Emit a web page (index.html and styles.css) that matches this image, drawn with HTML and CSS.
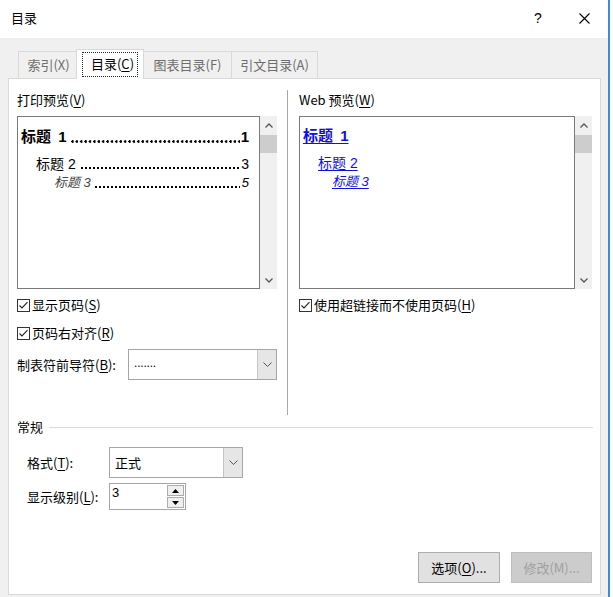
FILE: index.html
```html
<!DOCTYPE html>
<html lang="zh-CN">
<head>
<meta charset="utf-8">
<title>目录</title>
<link rel="stylesheet" href="styles.css">
</head>
<body>
<div class="window">
  <div class="titlebar">
    <span class="title">目录</span>
    <div class="controls">
      <span class="ctl help">?</span>
      <span class="ctl close"><svg width="11" height="11" viewBox="0 0 11 11"><path d="M0.5 0.5 L10.5 10.5 M10.5 0.5 L0.5 10.5" stroke="#000" stroke-width="1.1" fill="none"/></svg></span>
    </div>
  </div>
  <div class="main">
    <div class="tabs">
      <div class="tab t1">索引(X)</div>
      <div class="tab active"><span class="focus">目录(<u>C</u>)</span></div>
      <div class="tab t3">图表目录(F)</div>
      <div class="tab t4">引文目录(A)</div>
    </div>
    <div class="panel">
      <div class="top">
        <div class="col left">
          <div class="label">打印预览(<u>V</u>)</div>
          <div class="preview">
            <div class="pbox">
              <div class="entry e1"><span class="hd">标题 1</span><span class="leader"></span><span class="pg">1</span></div>
              <div class="entry e2"><span class="hd">标题 2</span><span class="leader"></span><span class="pg">3</span></div>
              <div class="entry e3"><span class="hd">标题 3</span><span class="leader"></span><span class="pg">5</span></div>
            </div>
            <div class="sbar">
              <div class="arr"><svg width="8" height="5" viewBox="0 0 8 5"><path d="M0.5 4.5 L4 1 L7.5 4.5" stroke="#555" stroke-width="1.3" fill="none"/></svg></div>
              <div class="thumb"></div>
              <div class="sfill"></div>
              <div class="arr"><svg width="8" height="5" viewBox="0 0 8 5"><path d="M0.5 0.5 L4 4 L7.5 0.5" stroke="#555" stroke-width="1.3" fill="none"/></svg></div>
            </div>
          </div>
          <div class="check first">
            <span class="cb"><svg width="13" height="13" viewBox="0 0 13 13"><rect x="0.5" y="0.5" width="12" height="12" fill="#fff" stroke="#333"/><path d="M2.5 6.5 L5 9 L10.5 3.2" stroke="#222" stroke-width="1.1" fill="none"/></svg></span>
            <span>显示页码(<u>S</u>)</span>
          </div>
          <div class="check second">
            <span class="cb"><svg width="13" height="13" viewBox="0 0 13 13"><rect x="0.5" y="0.5" width="12" height="12" fill="#fff" stroke="#333"/><path d="M2.5 6.5 L5 9 L10.5 3.2" stroke="#222" stroke-width="1.1" fill="none"/></svg></span>
            <span>页码右对齐(<u>R</u>)</span>
          </div>
          <div class="field leaderrow">
            <span class="flabel lw1">制表符前导符(<u>B</u>):</span>
            <div class="combo c1">
              <span class="cval dots">.......</span>
              <span class="cbtn"><svg width="9" height="5" viewBox="0 0 9 5"><path d="M0.5 0.5 L4.5 4.5 L8.5 0.5" stroke="#555" stroke-width="1" fill="none"/></svg></span>
            </div>
          </div>
        </div>
        <div class="vsep"></div>
        <div class="col right">
          <div class="label">Web 预览(<u>W</u>)</div>
          <div class="preview">
            <div class="pbox wide">
              <div class="link l1"><a>标题 1</a></div>
              <div class="link l2"><a>标题 2</a></div>
              <div class="link l3"><a>标题 3</a></div>
            </div>
            <div class="sbar">
              <div class="arr"><svg width="8" height="5" viewBox="0 0 8 5"><path d="M0.5 4.5 L4 1 L7.5 4.5" stroke="#555" stroke-width="1.3" fill="none"/></svg></div>
              <div class="thumb"></div>
              <div class="sfill"></div>
              <div class="arr"><svg width="8" height="5" viewBox="0 0 8 5"><path d="M0.5 0.5 L4 4 L7.5 0.5" stroke="#555" stroke-width="1.3" fill="none"/></svg></div>
            </div>
          </div>
          <div class="check first">
            <span class="cb"><svg width="13" height="13" viewBox="0 0 13 13"><rect x="0.5" y="0.5" width="12" height="12" fill="#fff" stroke="#333"/><path d="M2.5 6.5 L5 9 L10.5 3.2" stroke="#222" stroke-width="1.1" fill="none"/></svg></span>
            <span>使用超链接而不使用页码(<u>H</u>)</span>
          </div>
        </div>
      </div>
      <div class="genhead"><span>常规</span><span class="gline"></span></div>
      <div class="field fmt">
        <span class="flabel lw2">格式(<u>T</u>):</span>
        <div class="combo c2">
          <span class="cval">正式</span>
          <span class="cbtn"><svg width="9" height="5" viewBox="0 0 9 5"><path d="M0.5 0.5 L4.5 4.5 L8.5 0.5" stroke="#555" stroke-width="1" fill="none"/></svg></span>
        </div>
      </div>
      <div class="field lvl">
        <span class="flabel lw2">显示级别(<u>L</u>):</span>
        <div class="spin">
          <span class="sval">3</span>
          <span class="sbtns">
            <span class="sb"><svg width="7" height="4" viewBox="0 0 7 4"><path d="M0 4 L3.5 0 L7 4 Z" fill="#000"/></svg></span>
            <span class="sb"><svg width="7" height="4" viewBox="0 0 7 4"><path d="M0 0 L3.5 4 L7 0 Z" fill="#000"/></svg></span>
          </span>
        </div>
      </div>
      <div class="buttons">
        <div class="btn">选项(<u>O</u>)...</div>
        <div class="btn disabled">修改(M)...</div>
      </div>
    </div>
  </div>
</div>
</body>
</html>
```

FILE: styles.css
```css
* { box-sizing: border-box; }
html, body { margin: 0; padding: 0; background: #fff; }
body {
  width: 613px;
  height: 597px;
  overflow: hidden;
  font-family: "Noto Sans CJK SC", "Liberation Sans", sans-serif;
  font-size: 13px;
  color: #000;
}
u { text-decoration: underline; text-underline-offset: 2px; }

.window {
  width: 610px;
  height: 597px;
  border-right: 2px solid #3a8ee0;
  background: #f0f0f0;
  display: flex;
  flex-direction: column;
}

.titlebar {
  height: 38px;
  background: #fff;
  display: flex;
  align-items: center;
  padding-left: 11px;
}
.title { font-size: 13px; line-height: 16px; margin-top: -2px; }
.controls { margin-left: auto; display: flex; margin-right: 1px; }
.ctl {
  width: 46px;
  height: 38px;
  display: flex;
  align-items: center;
  justify-content: center;
}
.help { font-family: "Liberation Sans", sans-serif; font-size: 14px; padding-bottom: 3px; }
.close { padding-bottom: 1px; }

.main {
  flex: 1;
  display: flex;
  flex-direction: column;
  padding: 0 7px 2px 8px;
}

.tabs {
  height: 40px;
  display: flex;
  align-items: flex-end;
  padding-left: 10px;
}
.tab {
  height: 27px;
  border: 1px solid #d9d9d9;
  border-bottom: none;
  background: #f0f0f0;
  color: #6d6d6d;
  display: flex;
  align-items: center;
  justify-content: center;
  font-size: 13px;
  line-height: 16px;
  white-space: nowrap;
}
.t1 { width: 59px; padding-left: 2px; }
.t3 { width: 89px; margin-left: -1px; }
.t4 { width: 87px; margin-left: -1px; }
.tab.active {
  width: 68px;
  height: 30px;
  margin-left: -1px;
  background: #fff;
  color: #000;
  margin-bottom: -1px;
  position: relative;
  z-index: 2;
  align-items: flex-start;
  padding-top: 2px;
}
.focus {
  border: 1px dotted #222;
  padding: 3px 3px 4px 8px;
  line-height: 16px;
  white-space: nowrap;
}

.panel {
  flex: 1;
  background: #fff;
  border: 1px solid #d9d9d9;
  position: relative;
  z-index: 1;
  display: flex;
  flex-direction: column;
  padding: 11px 7px 11px 8px;
}

.top { display: flex; height: 325px; }
.col.left { width: 260px; }
.col.right { width: 294px; }
.vsep { width: 1px; background: #a8a8a8; margin: 0 11px 0 10px; }

.label { margin-top: 2px; height: 16px; line-height: 16px; margin-bottom: 8px; }

.preview { display: flex; height: 173px; }
.pbox {
  width: 243px;
  border: 1px solid #7a7a7a;
  background: #fff;
  padding: 10px 10px 0 3px;
}
.pbox.wide { width: 276px; padding: 9px 0 0 3px; }
.sbar {
  width: 17px;
  background: #f0f0f0;
  display: flex;
  flex-direction: column;
}
.arr { height: 17px; display: flex; align-items: center; justify-content: center; }
.arr:first-child { height: 18px; }
.thumb { height: 18px; margin-top: 1px; background: #cdcdcd; }
.sfill { flex: 1; }

.entry {
  display: flex;
  align-items: flex-end;
  font-family: "Liberation Sans", "Noto Sans CJK SC", sans-serif;
}
.entry .hd, .entry .pg { white-space: nowrap; }
.entry .leader {
  flex: 1;
  height: 2px;
  background-image: radial-gradient(circle at 1px 1px, #000 0.75px, transparent 1.1px);
  background-size: 4px 2px;
  background-repeat: repeat-x;
}
.e1 { font-size: 15px; font-weight: bold; line-height: 20px; }
.e1 .hd { word-spacing: 3px; }
.e1 .leader {
  height: 3px;
  margin: 0 1px 4px 4px;
  background-image: radial-gradient(circle at 1.5px 1.5px, #000 1.1px, transparent 1.5px);
  background-size: 4.4px 3px;
}
.e2 { font-size: 14px; line-height: 20px; margin-top: 7px; padding-left: 15px; }
.e2 .leader { margin: 0 2px 5px 5px; }
.e3 { font-size: 13px; line-height: 18px; padding-left: 33px; }
.e3 .hd, .e3 .pg { font-style: italic; }
.e3 .hd { color: #444; }
.e3 .leader { margin: 0 2px 4px 4px; }

.link {
  font-family: "Liberation Sans", "Noto Sans CJK SC", sans-serif;
  color: #0000ee;
}
.link a { color: #1010e0; text-decoration: underline; text-underline-offset: 2px; }
.l1 { font-size: 15px; font-weight: bold; line-height: 20px; word-spacing: 3px; }
.l2 { font-size: 14px; line-height: 20px; margin-top: 7px; padding-left: 15px; }
.l3 { font-size: 13px; line-height: 18px; padding-left: 29px; font-style: italic; }

.check { display: flex; align-items: center; height: 16px; line-height: 16px; }
.check.first { margin-top: 8px; }
.check.second { margin-top: 12px; }
.cb { width: 13px; height: 13px; margin-right: 2px; display: flex; }

.field { display: flex; align-items: center; }
.leaderrow { margin-top: 8px; }
.flabel { line-height: 16px; }
.lw1 { width: 111px; }
.lw2 { width: 92px; padding-left: 10px; }

.combo {
  display: flex;
  border: 1px solid #a6a6a6;
  background: #fff;
}
.c1 { width: 149px; height: 31px; }
.c2 { width: 134px; height: 31px; }
.cval { flex: 1; padding-left: 5px; display: flex; align-items: center; line-height: 16px; }
.dots { font-family: "Liberation Sans", sans-serif; font-size: 12px; padding-bottom: 3px; letter-spacing: -0.2px; }
.cbtn {
  width: 19px;
  background: #e6e6e6;
  border-left: 1px solid #c4c4c4;
  display: flex;
  align-items: center;
  justify-content: center;
}

.genhead { display: flex; align-items: center; margin-top: 4px; height: 16px; line-height: 16px; }
.gline { flex: 1; height: 1px; background: #dcdcdc; margin-left: 6px; }

.fmt { margin-top: 12px; }
.lvl { margin-top: 5px; }

.spin {
  width: 77px;
  height: 27px;
  border: 1px solid #a6a6a6;
  display: flex;
  background: #fff;
}
.sval { flex: 1; padding-left: 2px; line-height: 18px; font-family: "Liberation Sans", sans-serif; font-size: 13px; }
.sbtns { width: 18px; display: flex; flex-direction: column; padding: 1px 1px 1px 0; gap: 1px; }
.sb {
  flex: 1;
  background: #efefef;
  border: 1px solid #acacac;
  display: flex;
  align-items: center;
  justify-content: center;
}

.buttons {
  margin-top: auto;
  display: flex;
  justify-content: flex-end;
  gap: 11px;
  padding-right: 1px;
}
.btn {
  width: 82px;
  height: 31px;
  border: 1px solid #adadad;
  background: #e1e1e1;
  display: flex;
  align-items: center;
  justify-content: center;
  line-height: 16px;
}
.btn.disabled {
  width: 81px;
  background: #cccccc;
  border-color: #bfbfbf;
  color: #a0a0a0;
}
```
